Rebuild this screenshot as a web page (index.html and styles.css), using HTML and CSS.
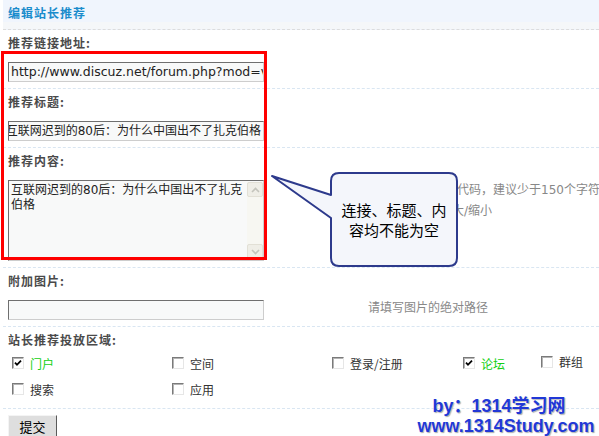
FILE: index.html
```html
<!DOCTYPE html>
<html lang="zh-CN">
<head>
    <meta charset="UTF-8">
    <title>编辑站长推荐</title>
    <link rel="stylesheet" href="styles.css">
</head>
<body>
    <div class="panel">
        <h3 class="panel-title">编辑站长推荐</h3>

        <!-- 链接 -->
        <div class="item">
            <div class="item-label">推荐链接地址:</div>
            <div class="item-body">
                <div class="field field-url">http://www.discuz.net/forum.php?mod=viewthread&amp;tid=210745</div>
            </div>
        </div>

        <!-- 标题 -->
        <div class="item">
            <div class="item-label">推荐标题:</div>
            <div class="item-body">
                <div class="field field-end"><span>互联网迟到的80后：为什么中国出不了扎克伯格</span></div>
            </div>
        </div>

        <!-- 内容 -->
        <div class="item">
            <div class="item-label">推荐内容:</div>
            <div class="item-body">
                <div class="textarea">
                    <div class="textarea-text">互联网迟到的80后：为什么中国出不了扎克伯格</div>
                    <div class="scrollbar">
                        <div class="scroll-btn">
                            <svg width="9" height="6" viewBox="0 0 9 6"><path d="M1 5 L4.5 1.5 L8 5" fill="none" stroke="#c4c4bc" stroke-width="1.6"/></svg>
                        </div>
                        <div class="scroll-btn">
                            <svg width="9" height="6" viewBox="0 0 9 6"><path d="M1 1 L4.5 4.5 L8 1" fill="none" stroke="#c4c4bc" stroke-width="1.6"/></svg>
                        </div>
                    </div>
                </div>
                <div class="hint">内容支持 HTML 代码，建议少于150个字符<br>可拖动右下角放大/缩小</div>
            </div>
        </div>

        <!-- 图片 -->
        <div class="item">
            <div class="item-label">附加图片:</div>
            <div class="item-body">
                <div class="field"></div>
                <div class="hint hint-mid">请填写图片的绝对路径</div>
            </div>
        </div>

        <!-- 投放区域 -->
        <div class="item">
            <div class="item-label item-label-tight">站长推荐投放区域:</div>
            <div class="checks">
                <label class="check on"><span class="box"><svg width="8" height="8" viewBox="0 0 8 8"><path d="M1 3.6 L3 5.8 L7 1.6" fill="none" stroke="#000" stroke-width="1.8"/></svg></span>门户</label>
                <label class="check"><span class="box"></span>空间</label>
                <label class="check"><span class="box"></span>登录/注册</label>
                <label class="check on"><span class="box"><svg width="8" height="8" viewBox="0 0 8 8"><path d="M1 3.6 L3 5.8 L7 1.6" fill="none" stroke="#000" stroke-width="1.8"/></svg></span>论坛</label>
                <label class="check check-up"><span class="box"></span>群组</label>
                <label class="check"><span class="box"></span>搜索</label>
                <label class="check"><span class="box"></span>应用</label>
            </div>
        </div>

        <div class="actions">
            <button class="submit">提交</button>
        </div>
    </div>

    <!-- 红框标注 -->
    <div class="mark"></div>

    <!-- 提示气泡 -->
    <div class="callout">
        <svg width="190" height="96" viewBox="0 0 190 96">
            <path d="M69 1 H179 Q187 1 187 9 V86 Q187 94 179 94 H69 Q61 94 61 86 V46 L2 4 L61 23 V9 Q61 1 69 1 Z" fill="#f4f6fb" stroke="#2d3a8c" stroke-width="2" stroke-linejoin="round"/>
        </svg>
        <div class="callout-text">连接、标题、内<br>容均不能为空</div>
    </div>

    <div class="stamp">
        <div class="stamp-by">by：1314学习网</div>
        <div>www.1314Study.com</div>
    </div>
</body>
</html>
```

FILE: styles.css
```css
body {
    margin: 0;
    height: 436px;
    overflow: hidden;
    position: relative;
    background: #fff;
    color: #222;
    font-family: "DejaVu Sans", "Noto Sans CJK SC", sans-serif;
    font-size: 12px;
}

.panel {
    margin-left: 3px;
}

.panel-title {
    margin: 0;
    height: 26px;
    padding: 3px 0 0 5px;
    line-height: 20px;
    font-family: "Noto Sans CJK SC", sans-serif;
    font-size: 12px;
    font-weight: bold;
    letter-spacing: 1px;
    color: #1a8ccc;
    background: linear-gradient(#f0f5fd 22px, #f5f7f9 22px);
    border-bottom: 1px dashed #dcdcdc;
}

.item {
    padding: 3px 0 6px 5px;
    border-bottom: 1px dashed #d9e6f2;
}

.item-label {
    line-height: 20px;
    margin-bottom: 9px;
    font-family: "Noto Sans CJK SC", sans-serif;
    font-weight: bold;
    letter-spacing: 1px;
    color: #4a4a4a;
}

.item-label-tight {
    margin-bottom: 0;
}

.item-body {
    display: flex;
    align-items: flex-start;
}

.field {
    width: 256px;
    height: 20px;
    flex: none;
    box-sizing: border-box;
    border: 1px solid;
    border-color: #6f6f6f #cdcdcd #cdcdcd #6f6f6f;
    background: #f8f9f9;
    padding: 0 2px;
    line-height: 18px;
    white-space: nowrap;
    overflow: hidden;
}

.field-url {
    font-size: 12.5px;
}

.field-end {
    display: flex;
    justify-content: flex-end;
}

.textarea {
    width: 256px;
    height: 81px;
    flex: none;
    box-sizing: border-box;
    display: flex;
    border: 1px solid;
    border-color: #6f6f6f #cdcdcd #cdcdcd #6f6f6f;
    background: #f8f9f9;
}

.textarea-text {
    flex: 1;
    padding: 2px 0 0 2px;
    line-height: 15px;
}

.scrollbar {
    width: 16px;
    margin: 1px 0;
    background: #f7f7f2;
    display: flex;
    flex-direction: column;
    justify-content: space-between;
}

.scroll-btn {
    height: 15px;
    box-sizing: border-box;
    border: 1px solid #e2e0d6;
    border-radius: 2px;
    background: #efeee7;
    display: flex;
    align-items: center;
    justify-content: center;
}

.hint {
    margin-left: 104px;
    line-height: 21px;
    color: #888;
    white-space: nowrap;
}

.hint-mid {
    line-height: 17px;
}

.checks {
    display: grid;
    grid-template-columns: 160px 160px 131px 78px 1fr;
    grid-auto-rows: 26px;
    align-items: center;
    font-family: "Noto Sans CJK SC", sans-serif;
    color: #333;
}

.check {
    display: flex;
    align-items: center;
    gap: 6px;
    padding-left: 4px;
}

.check-up {
    margin-top: -3px;
}

.check.on {
    color: #12cf12;
}

.box {
    width: 12px;
    height: 12px;
    box-sizing: border-box;
    border: 1px solid;
    border-color: #7a7a7a #e6e6e6 #e6e6e6 #7a7a7a;
    box-shadow: inset 1px 1px #b4b4b4;
    background: #fff;
    display: flex;
    align-items: center;
    justify-content: center;
}

.actions {
    display: flex;
    padding: 6px 0 0 5px;
}

.submit {
    width: 49px;
    height: 24px;
    padding: 0;
    border: 1px solid;
    border-color: #f4f4f4 #5a5a5a #5a5a5a #f4f4f4;
    background: #dedede;
    color: #000;
    font-family: "Noto Sans CJK SC", sans-serif;
    font-size: 13px;
    line-height: 20px;
}

/* annotation overlays */
.mark {
    position: absolute;
    left: 1px;
    top: 51px;
    width: 266px;
    height: 209px;
    box-sizing: border-box;
    border: 3px solid #f00;
}

.callout {
    position: absolute;
    left: 270px;
    top: 172px;
    width: 190px;
    height: 96px;
}

.callout svg {
    display: block;
}

.callout-text {
    position: absolute;
    left: 61px;
    top: 1px;
    width: 126px;
    height: 93px;
    display: flex;
    align-items: center;
    justify-content: center;
    text-align: center;
    font-family: "Noto Sans CJK SC", sans-serif;
    font-size: 15px;
    line-height: 20px;
    color: #000;
}

.stamp {
    position: absolute;
    left: 414px;
    top: 396px;
    width: 184px;
    text-align: center;
    font-family: "Liberation Sans", "Noto Sans CJK SC", sans-serif;
    font-size: 18px;
    font-weight: bold;
    line-height: 20px;
    color: #2138d6;
    text-shadow: 0 0 2px #fff, 1px 1px 1px #9a9a9a;
}

.stamp-by {
    padding-right: 14px;
}
```
